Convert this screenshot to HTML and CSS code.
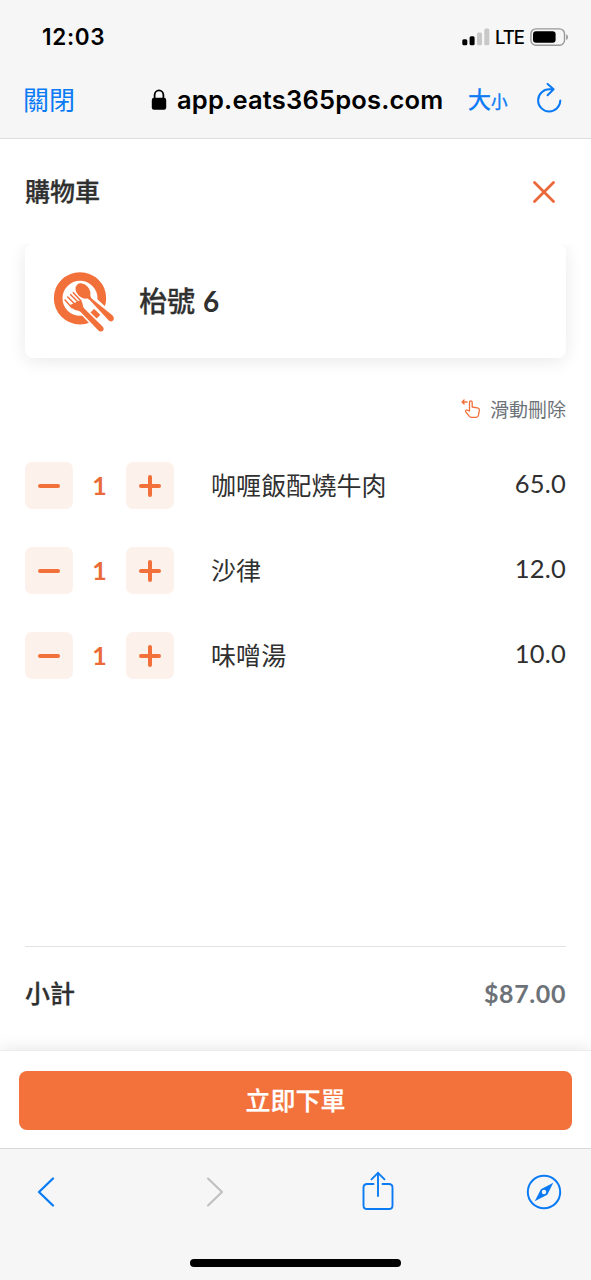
FILE: index.html
```html
<!DOCTYPE html>
<html lang="zh-Hant">
<head>
<meta charset="utf-8">
<title>購物車</title>
<link rel="stylesheet" href="styles.css">
</head>
<body>
<div class="screen">
  <header class="browser-top">
    <div class="status">
      <span class="time">12:03</span>
      <div class="status-right">
        <svg class="signal" width="28" height="18" viewBox="0 0 28 18"><rect x="0.3" y="11.3" width="5" height="6" rx="1.5"/><rect x="7.6" y="8.2" width="5" height="9.1" rx="1.5"/><rect class="dim" x="15" y="4.6" width="5" height="12.7" rx="1.5"/><rect class="dim" x="22.3" y="0.6" width="5" height="16.7" rx="1.5"/></svg>
        <span class="lte">LTE</span>
        <svg class="battery" width="39" height="18" viewBox="0 0 39 18"><rect x="0.9" y="0.9" width="33.6" height="16.4" rx="5" fill="none" stroke="#999" stroke-width="1.4"/><rect x="3" y="3.2" width="22.6" height="11.6" rx="3" fill="#000"/><path d="M36.2 6.2c2.4 1.2 2.4 4.6 0 5.8z" fill="#999"/></svg>
      </div>
    </div>
    <div class="address">
      <span class="close-link">關閉</span>
      <svg class="lock" width="16" height="22" viewBox="0 0 16 22"><path d="M3.6 10V6.2a4.4 4.9 0 0 1 8.8 0V10" fill="none" stroke="#000" stroke-width="1.8"/><rect x="0.8" y="8.8" width="14.4" height="12" rx="2.2"/></svg>
      <span class="url">app.eats365pos.com</span>
      <span class="size-link">大<small>小</small></span>
      <svg class="reload" width="26" height="30" viewBox="0 0 26 30"><path d="M17.600 6.300H13.400a11.100 11.100 0 1 0 10.900 11.200M11.600.9l6 5.4-6 6" fill="none" stroke="#0a7bf5" stroke-width="2" stroke-linecap="round" stroke-linejoin="round"/></svg>
    </div>
  </header>

  <main class="cart">
    <div class="title-row">
      <h1>購物車</h1>
      <svg class="close" width="22" height="22" viewBox="0 0 22 22"><path d="M1.5 1.5l19 19M20.5 1.5l-19 19" fill="none" stroke="#ea6737" stroke-width="2.7" stroke-linecap="round"/></svg>
    </div>
    <div class="card-wrap">
      <section class="table-card">
        <svg class="plate" width="64" height="64" viewBox="38 34 192 192">
          <circle cx="119" cy="116" r="65.5" fill="none" stroke="#f2703a" stroke-width="26"/>
          <g fill="#fff" stroke="#fff" stroke-width="10" stroke-linejoin="round"><ellipse cx="128" cy="94" rx="19" ry="26" transform="rotate(-43 128 94)"/><path d="M137 118L152 108L216 167C228 179 214 192 204 181Z"/><path d="M74 121L90 139C103 159 114 155 120 155L172 210C183 223 197 211 186 200L132 147C124 139 130 132 120 122L99 99Z"/></g>
          <g fill="#f2703a"><ellipse cx="128" cy="94" rx="19" ry="26" transform="rotate(-43 128 94)"/><path d="M138 114L149 105Q150 115 160 122L216 167C228 179 214 192 204 181L156 129Q148 119 138 114Z"/><path d="M88 137C103 157 112 150 121 157L172 210C183 223 197 211 186 200L134 149C124 139 131 132 120 122Z"/></g>
          <path d="M74 121L95 144M82 112L106 136M91 105L115 129M99 99L122 124" fill="none" stroke="#f2703a" stroke-width="4.5" stroke-linecap="round"/>
        </svg>
        <span class="table-name">枱號 <b>6</b></span>
      </section>
    </div>
    <div class="hint">
      <svg width="20" height="20" viewBox="0 0 20 20" fill="none" stroke="#f2703a" stroke-width="1.3" stroke-linecap="round" stroke-linejoin="round"><path d="M6 3H1.100M3.100 1L1.100 3l2 2"/><path d="M8.5 12V3.4c0-2 2.700-2 2.700 0V8l5.2.9c1.600.3 2.200 1.200 1.900 2.800l-.8 4.500c-.3 1.600-1 2.200-2.400 2.200h-4.400c-1 0-1.700-.3-2.300-1.100l-3.600-4.500c-.8-1.200.7-2.400 1.800-1.500z"/></svg>
      <span>滑動刪除</span>
    </div>
    <div class="items">
      <div class="item"><span class="btn minus"></span><span class="qty">1</span><span class="btn plus"></span><span class="name">咖喱飯配燒牛肉</span><span class="price">65.0</span></div>
      <div class="item"><span class="btn minus"></span><span class="qty">1</span><span class="btn plus"></span><span class="name">沙律</span><span class="price">12.0</span></div>
      <div class="item"><span class="btn minus"></span><span class="qty">1</span><span class="btn plus"></span><span class="name">味噌湯</span><span class="price">10.0</span></div>
    </div>
    <div class="subtotal"><span class="sub-label">小計</span><span class="sub-value">$87.00</span></div>
  </main>

  <div class="order-bar"><div class="order-btn">立即下單</div></div>

  <footer class="browser-bottom">
    <nav class="tools">
      <svg width="18" height="30" viewBox="0 0 18 30"><path d="M16 1.5L2 15l14 13.5" fill="none" stroke="#0a7bf5" stroke-width="2.3" stroke-linecap="round" stroke-linejoin="round"/></svg>
      <svg class="forward" width="18" height="30" viewBox="0 0 18 30"><path d="M2 1.5L16 15 2 28.5" fill="none" stroke="#bfbfbf" stroke-width="2.1" stroke-linecap="round" stroke-linejoin="round"/></svg>
      <svg class="share" width="32" height="40" viewBox="0 0 32 40"><path d="M11.5 13H5.2C2.8 13 1.5 14.2 1.5 16.6v17.8c0 2.4 1.3 3.6 3.7 3.6h21.6c2.4 0 3.7-1.2 3.7-3.6V16.6c0-2.4-1.3-3.6-3.7-3.6h-6.3M16 25V1.8M9.5 8.3L16 1.8l6.5 6.5" fill="none" stroke="#0a7bf5" stroke-width="1.9" stroke-linecap="round" stroke-linejoin="round"/></svg>
      <svg class="compass" width="36" height="36" viewBox="0 0 36 36"><circle cx="18" cy="18" r="16.2" fill="none" stroke="#0a7bf5" stroke-width="2"/><path fill="#0a7bf5" fill-rule="evenodd" d="M27.3 8.7L21.3 20.7 8.7 27.3l6.2-12.1zM20.2 18a2.2 2.2 0 1 0-4.4 0 2.2 2.2 0 0 0 4.4 0z"/></svg>
    </nav>
    <div class="home"></div>
  </footer>
</div>
</body>
</html>
```
FILE: styles.css
```css
* { box-sizing: border-box; }
body { margin: 0; background: #fff; color: #303030; font-family: Lato, "Noto Sans CJK TC", sans-serif; }
svg { display: block; flex: none; }
span { white-space: nowrap; }
.screen { width: 591px; height: 1280px; display: flex; flex-direction: column; overflow: hidden; }

.browser-top { height: 139px; flex: none; background: #f6f6f6; border-bottom: 1px solid #dedede; color: #000; }
.status { height: 72px; padding: 2px 22px 0 42px; display: flex; align-items: center; justify-content: space-between; }
.time { font: 600 22.5px/30px Inter, sans-serif; letter-spacing: 0.7px; }
.status-right { display: flex; align-items: center; }
.signal .dim { fill: #c8c8c8; }
.lte { font: 500 18.5px/24px Inter, sans-serif; margin: 0 6px 0 5px; letter-spacing: -1px; }
.address { height: 56px; padding: 0 29px 0 23px; display: flex; align-items: center; color: #0a7bf5; }
.close-link { font: 400 26px/36px "Noto Sans CJK TC", sans-serif; width: 128px; padding-bottom: 2px; }
.url { font: 600 25.5px/36px Inter, sans-serif; color: #000; margin-left: 10px; width: 291px; letter-spacing: 0.2px; }
.size-link { font: 400 23px/36px "Noto Sans CJK TC", sans-serif; flex: 1; padding-bottom: 2px; -webkit-text-stroke: 0.4px; }
.size-link small { font-size: 16.5px; }
.reload { margin-top: -4px; }

.cart { height: 911px; flex: none; padding: 0 25px; display: flex; flex-direction: column; }
.title-row { height: 105px; padding-right: 11px; display: flex; align-items: center; justify-content: space-between; }
h1 { margin: 0; padding-bottom: 3px; font: 500 25px/36px "Noto Sans CJK TC", sans-serif; -webkit-text-stroke: 0.3px; }
.card-wrap { margin: 0 -25px; padding: 0 25px 30px; overflow: hidden; height: 140px; }
.table-card { height: 114px; border-radius: 8px; background: #fff; box-shadow: 0 3px 18px rgba(0,0,0,.09); display: flex; align-items: center; padding-left: 28px; }
.plate { margin-top: 4px; }
.table-name { margin-left: 22px; font: 500 28px/40px Lato, "Noto Sans CJK TC", sans-serif; -webkit-text-stroke: 0.3px; }
.table-name b { font-weight: 700; margin-left: 1px; -webkit-text-stroke: 0; }
.hint { height: 52px; display: flex; justify-content: flex-end; align-items: center; gap: 9px; color: #6d7278; font-size: 19px; font-family: "Noto Sans CJK TC", sans-serif; }
.hint svg { margin-top: -2px; }
.hint span { padding-bottom: 4px; }
.items { padding-top: 26px; display: grid; grid-auto-rows: 47px; row-gap: 38px; }
.item { display: grid; grid-template-columns: 48px 53px 48px 1fr auto; align-items: center; font-size: 25px; }
.btn { height: 47px; border-radius: 7px; background: #fdf1ec; display: grid; place-items: center; }
.btn::before, .btn.plus::after { content: ""; grid-area: 1 / 1; width: 22px; height: 4px; border-radius: 2px; background: #f2703a; }
.btn.plus::after { width: 4px; height: 22px; }
.qty { text-align: center; color: #ea6a38; font-weight: 700; padding-bottom: 2px; }
.name { padding: 0 0 3px 37px; letter-spacing: 0.1px; }
.price { font-size: 25.5px; line-height: 36px; margin: -6px 0 0; letter-spacing: 0.2px; }
.subtotal { margin-top: auto; height: 104px; border-top: 1px solid #e2e2e2; display: flex; justify-content: space-between; padding-top: 28px; font-size: 25px; line-height: 36px; }
.sub-label { font-weight: 500; -webkit-text-stroke: 0.3px; }
.sub-value { color: #6d7278; font-weight: 700; letter-spacing: 0.6px; }

.order-bar { height: 98px; flex: none; background: #fff; box-shadow: 0 -1px 16px rgba(0,0,0,.1); border-top: 1px solid #ededed; padding: 20px 19px 0; position: relative; }
.order-btn { height: 59px; border-radius: 8px; background: #f3713b; color: #fff; text-align: center; font: 500 25px/56px "Noto Sans CJK TC", sans-serif; -webkit-text-stroke: 0.25px; }

.browser-bottom { height: 132px; flex: none; background: #f6f6f6; border-top: 1px solid #d8d8d8; position: relative; }
.tools { height: 86px; padding: 0 29px 0 37px; display: flex; align-items: center; }
.forward { margin-left: 151px; }
.share { margin: -2px 0 0 138px; }
.compass { margin-left: auto; }
.home { width: 211px; height: 8px; border-radius: 4px; background: #000; margin: 24px auto 0; }
```
